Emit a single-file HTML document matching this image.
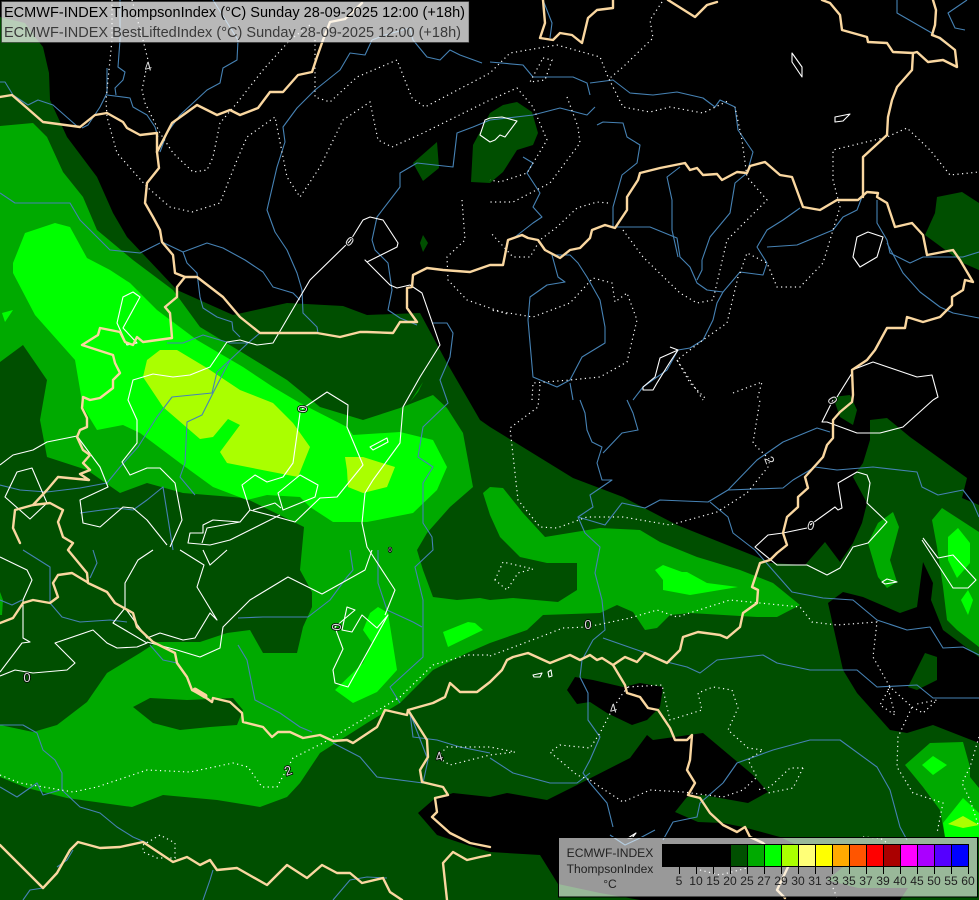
<!DOCTYPE html>
<html><head><meta charset="utf-8"><title>ECMWF-INDEX</title>
<style>
html,body{margin:0;padding:0;background:#000;width:979px;height:900px;overflow:hidden}
svg{display:block}
text{font-family:"Liberation Sans",sans-serif}
.b{fill:none;stroke:#fad7a0;stroke-width:2.4;stroke-linejoin:round;stroke-linecap:round}
.r{fill:none;stroke:#4682b4;stroke-width:1.1;stroke-linejoin:round}
.w{fill:none;stroke:#fff;stroke-width:1.1;stroke-linejoin:round}
.d{fill:none;stroke:#fff;stroke-width:1.2;stroke-dasharray:1.2 3.4;stroke-linecap:butt}
.l{fill:#ddd;font-size:13px;text-anchor:middle;paint-order:stroke;stroke:#000;stroke-width:1.5px}
.t{font-size:12.1px;fill:#222;text-anchor:middle}
</style></head><body>
<svg width="979" height="900" viewBox="0 0 979 900" xmlns="http://www.w3.org/2000/svg">
<rect width="979" height="900" fill="#004f00"/>
<g fill="#000">
<polygon points="0,0 979,0 979,270 979,203 962,192 937,197 935,213 925,235 963,263 979,270 979,505 962,498 967,478 910,437 887,418 870,420 870,440 863,463 853,477 867,503 862,523 853,543 840,562 825,542 805,565 770,563 757,557 677,525 623,497 573,478 490,427 480,420 447,363 420,313 367,315 343,306 287,303 233,315 177,290 127,237 113,213 97,177 67,137 50,100 49,73 43,47 35,37 25,23 0,17"/>
<polygon points="828,603 843,592 863,597 900,613 917,607 923,562 933,583 931,600 943,630 979,657 979,743 933,725 907,733 890,730 857,693 843,670"/>
<polygon points="418,813 433,800 453,793 490,797 507,793 547,800 577,785 630,758 647,735 653,740 703,733 753,775 768,792 748,803 703,795 687,797 675,812 698,822 723,823 743,827 780,837 843,867 827,880 858,888 908,888 900,900 640,900 600,893 558,884 540,855 490,852 470,846 437,835"/>
<polygon points="567,690 575,677 593,680 623,687 640,683 663,687 660,707 647,720 632,725 607,713 590,702 577,704"/>
</g>
<g fill="#004f00">
<polygon points="490,113 503,105 517,102 532,112 538,133 533,145 517,150 503,172 490,183 471,182 473,145"/>
<polygon points="413,163 437,142 439,168 423,181"/>
<polygon points="423,235 428,243 423,252 420,243"/>
<polygon points="833,397 850,395 857,410 853,425 840,417"/>
<polygon points="908,687 925,653 937,657 937,680 917,690"/>
<polygon points="0,188 15,191 3,193"/>
</g>
<g fill="#00aa00">
<polygon points="0,126 33,123 47,137 63,172 83,197 97,230 133,260 173,290 200,327 243,353 287,380 320,407 363,420 400,408 433,395 447,408 463,433 473,487 450,507 427,533 417,550 423,570 433,597 457,600 480,598 490,600 513,598 558,602 577,590 577,563 547,563 520,557 500,537 490,515 483,493 490,487 503,488 523,513 545,537 600,528 640,530 660,542 697,557 740,570 773,583 800,605 777,617 757,617 690,613 670,615 657,628 645,630 633,612 617,605 600,613 543,615 527,630 490,643 467,653 433,670 400,703 367,723 320,753 300,783 287,797 260,807 217,800 163,795 132,807 67,798 27,788 0,777 0,725 33,732 57,725 87,702 107,673 140,653 157,642 200,642 227,633 250,630 263,653 297,653 303,627 312,607 312,592 300,570 304,527 245,498 183,493 147,483 120,493 87,470 47,457 40,420 47,380 23,345 0,362"/>
<polygon points="423,382 410,402 418,392"/>
<polygon points="878,523 893,512 899,527 890,560 897,582 887,588 878,577 868,543"/>
<polygon points="932,520 942,508 979,532 979,647 957,630 947,620 943,587 937,547"/>
<polygon points="905,765 930,743 963,742 970,767 970,777 979,788 979,837 945,837 940,810 923,787"/>
<polygon points="0,592 3,600 2,615 0,615"/>
</g>
<polygon fill="#004f00" points="133,707 150,698 187,700 233,698 243,710 237,725 210,727 180,730 153,723"/>
<polygon fill="#004f00" points="233,607 240,607 242,617 237,622"/>
<g fill="#00ff00">
<polygon points="13,273 13,263 25,233 55,223 70,227 87,258 110,270 130,283 157,310 197,340 243,367 273,387 300,403 347,427 353,435 400,432 433,440 447,467 437,490 413,513 367,522 333,522 310,507 300,497 267,495 247,500 213,487 180,463 140,433 123,425 97,430 83,407 75,360 35,315"/>
<polygon points="2,313 13,310 5,322"/>
<polygon points="335,690 363,663 372,643 363,630 370,613 378,607 388,613 397,670 377,692 353,703"/>
<polygon points="443,632 468,622 475,623 483,630 448,647"/>
<polygon points="655,570 663,565 682,572 687,572 707,583 738,587 690,595 663,590 663,580"/>
<polygon points="948,537 958,528 970,543 970,563 957,578 948,560"/>
<polygon points="968,590 973,600 968,615 961,600"/>
<polygon points="933,756 947,765 933,775 922,765"/>
<polygon points="943,823 963,798 979,813 979,837 945,837"/>
</g>
<g fill="#aaff00">
<polygon points="143,377 147,360 160,350 177,350 207,368 240,390 273,403 293,423 310,447 298,477 227,463 220,452 240,425 228,419 213,437 200,439 163,407"/>
<polygon points="345,457 363,457 395,467 387,487 363,493 348,487 347,470"/>
<polygon points="948,824 963,816 979,825 963,828"/>
</g>

<g class="r">
<path d="M120,0L120,40L118,67L125,72L123,80L115,88L116,95"/>
<path d="M107,68L107,93L100,107L88,125L82,128"/>
<path d="M107,95L130,98L133,107L147,115L155,127L158,137"/>
<path d="M0,82L5,82L13,95L28,105L38,100L53,105L78,127"/>
<path d="M213,0L238,40L237,60L223,68L220,83L207,90L193,103L180,115L167,133L160,152"/>
<path d="M372,40L365,55L350,53L340,70L315,90L297,108L283,127L285,142L277,167L267,210L275,232L287,250L297,273L302,290L303,313L317,327L318,333"/>
<path d="M482,63L460,55L450,50L440,60L427,57L413,40L410,28L385,35L372,40"/>
<path d="M0,193L15,203L70,203L80,220L110,250L140,253L160,243"/>
<path d="M490,120L473,127L457,133L453,167L417,163L400,173L400,187L377,217L372,240L375,250L388,263L392,290L388,310L400,318L417,325"/>
<path d="M162,242L183,252L207,243L223,248L245,260L263,272L273,287L293,293L300,300"/>
<path d="M183,252L187,263L197,273L200,297L203,308L217,317L232,322L233,330L240,337"/>
<path d="M167,343L183,343L203,335L230,343L248,343L260,333"/>
<path d="M248,343L230,360L217,372L212,393L172,397L157,417L138,447L120,467L107,483L80,488L47,492L20,490L0,485"/>
<path d="M230,360L213,393L202,415L187,422L185,463L180,477L195,495"/>
<path d="M432,323L447,323L453,333L450,357L440,380L448,403L423,427L418,457L433,467L423,483L423,523L432,537L433,550L415,567L423,600L423,657L390,687L400,703"/>
<path d="M378,550L378,583L387,610L413,622L422,627"/>
<path d="M350,550L353,570L347,577L330,600L308,617L263,617L238,618"/>
<path d="M238,645L247,660L255,700L280,713L300,727L312,732"/>
<path d="M0,725L23,725L37,733L43,750L55,760L62,773L62,790L80,807L100,813L117,827L133,837L147,843"/>
<path d="M0,787L17,797L37,783L43,795L60,790"/>
<path d="M333,743L360,757L377,777L423,783"/>
<path d="M410,713L413,737L437,740L460,747L490,753"/>
<path d="M580,400L585,413L587,430L592,442L602,447L597,463L602,480L612,480L590,495L593,507L578,517L585,533L600,547L595,573L602,600L605,630L593,640L582,660L580,677L588,693L588,720L600,737L590,760L583,773L590,783L607,803L613,827"/>
<path d="M627,400L633,413L638,430L622,433L603,453"/>
<path d="M578,517L605,525L622,503L645,508L660,500L708,502L728,490L783,488L793,480L815,467L837,470L873,467L917,472L922,487L938,495L963,490L973,503L979,517"/>
<path d="M710,502L728,517L733,533L755,550L770,567L792,592L823,598L853,600L877,620L907,630L930,627L943,648L963,647L979,655"/>
<path d="M728,490L757,460L783,442L817,428L830,432"/>
<path d="M603,638L643,652L667,662L687,667L700,673L717,660L763,655L777,663L810,670L857,670L877,687L917,685L933,698L979,698"/>
<path d="M490,758L513,773L550,783L577,783L590,773"/>
<path d="M723,783L737,763L773,750L810,740L840,740L877,767L890,790L900,827L907,840"/>
<path d="M723,783L700,803L697,817L673,822L663,840"/>
<path d="M490,62L523,65L533,77L573,77L587,83L590,95"/>
<path d="M590,83L613,80L630,93L653,95L677,92L703,98L715,107L720,100L735,107L738,130L753,152L747,173L735,183L730,213L710,237L702,260L702,270L697,280"/>
<path d="M490,120L533,115L560,108L587,115L595,107"/>
<path d="M597,125L603,122L623,123L627,137L640,145L637,163L622,175L613,207L613,227L650,227L677,238L680,257L690,267L697,283L707,290L723,292L717,303L713,320L703,340L690,348L678,350L667,370L643,387L633,400"/>
<path d="M680,167L667,177L672,200L672,230L678,257"/>
<path d="M523,157L533,163L527,173L540,193L533,207L542,217L533,223L515,237"/>
<path d="M723,292L740,272L763,275L767,263L757,247L767,230L783,220L800,208"/>
<path d="M767,247L797,245L833,230L843,217L857,210L862,197"/>
<path d="M877,200L877,223L887,240L890,253L910,263L923,257L963,257L979,252"/>
<path d="M887,243L903,273L920,292L940,307L953,313L979,318"/>
<path d="M552,255L558,277L565,282L547,285L530,297L528,320L533,377L557,387L570,380L582,357L605,343L605,327L600,300L587,277L578,263L570,255L552,255"/>
<path d="M570,383L573,400"/>
<path d="M543,0L552,23L550,38"/>
<path d="M897,0L897,13L930,32L955,50"/>
<path d="M967,0L948,13L955,28L965,30"/>
<path d="M80,513L117,508L133,510L147,500L163,487L173,550"/>
<path d="M23,550L50,567L50,603L62,617L80,622L110,620L127,622"/>
<path d="M93,550L97,563L90,578"/>
<path d="M0,600L12,605L22,600"/>
<path d="M150,645L163,660L177,663"/>
<path d="M23,900L30,890L43,888"/>
<path d="M57,867L67,860L73,850"/>
<path d="M203,900L210,880L213,870"/>
<path d="M333,900L350,880L367,877L387,878"/>
<path d="M410,713L428,760L423,783"/>
<path d="M610,835L625,845L640,838L655,830"/>
</g>

<g class="w">
<path d="M350,241L310,280L300,297L273,343L257,345L240,340L227,342L210,367L190,375L173,377L153,374L133,380L128,400L137,420L137,443L122,462L130,475L147,468L160,468L175,483L182,520L170,547"/>
<path d="M350,241L363,220L370,217L383,220L398,243L397,247L367,262L365,260L390,285L397,288L410,285L422,293L440,345L420,377L403,407L400,443L373,480L365,493L362,523L367,547L395,590L385,615"/>
<path d="M302,409L327,392L348,405L347,427L363,465L337,497L320,498L295,522L277,517L250,510L242,485L255,475L267,482L283,477L293,463L300,413"/>
<path d="M300,475L318,485L315,497L283,510L278,493Z"/>
<path d="M281,508L275,503L253,510"/>
<path d="M387,438L370,447L373,450L388,442Z"/>
<path d="M133,292L140,297L123,328L137,343L127,345L117,323L123,297Z"/>
<path d="M0,465L13,455L33,450L47,442L77,436L100,467L108,487L80,500L83,523L100,527L123,507L133,508L147,520L167,545"/>
<path d="M32,468L17,472L5,497L30,519L47,503Z"/>
<path d="M240,522L213,520L203,525L203,533L190,533L188,543L210,545L230,540L280,515"/>
<path d="M250,510L240,522L207,528L202,543"/>
<path d="M0,557L27,570L32,580L23,600L23,638L30,642L22,643L0,672"/>
<path d="M0,676L15,670L33,673L67,670L75,663L55,643L93,630L107,643L117,648L137,647L147,643L113,623L125,608L125,583L138,560L153,550"/>
<path d="M125,608L147,638L160,633L183,640L195,638L210,613L217,620L197,587L204,565L180,550"/>
<path d="M203,550L210,565L227,550"/>
<path d="M147,642L177,650L200,657L220,648L223,627L250,600L288,577L322,594L365,570L372,550"/>
<path d="M335,627L337,633L343,649L333,670L335,683L348,687L388,615L377,628L362,615L352,632L342,630L347,607L355,610L335,627"/>
<path d="M933,400L903,427L880,433L857,433L827,422L822,422L833,400"/>
<path d="M852,370L873,362L917,377L932,375L938,397L933,400"/>
<path d="M852,373L837,397"/>
<path d="M810,525L835,507L838,510L842,508L838,483L857,472L867,475L870,483L867,503L887,522L868,543L853,547L840,568L827,575L807,565L777,565L755,547L768,535L783,533L807,528"/>
<path d="M882,582L887,579L897,582L885,584Z"/>
<path d="M922,540L953,588L968,588L976,580L953,555L938,558L923,538"/>
<path d="M533,675L542,673L540,677L534,677Z"/>
<path d="M548,672L551,670L552,676L549,677Z"/>
<path d="M853,257L857,237L868,232L883,237L877,257L860,267Z"/>
<path d="M792,53L802,67L802,77L792,62Z"/>
<path d="M835,117L850,114L843,121L835,122Z"/>
<path d="M490,118L502,117L517,121L505,137L500,135L495,140L490,142L480,135L485,120Z"/>
<path d="M670,347L678,350L660,358L655,377L643,387L643,390L653,390L657,383L670,362L678,350"/>
<path d="M628,838L636,833L632,838Z"/>
</g>

<g class="d">
<path d="M132,0L143,40L148,60L142,90L145,103L160,133L173,153L193,172L207,170L213,157L220,123L237,103L263,70L290,40L310,25"/>
<path d="M112,0L112,40L106,100L107,117L117,153L147,187L170,207L192,212L220,203L237,160L247,137L275,117L287,177L300,197L320,167L343,120L370,102L378,140L392,147L423,133L490,100L517,88L533,107L547,140L527,173L500,182L490,180"/>
<path d="M315,40L315,97L330,102L357,77L397,60L412,98L425,107L490,73L510,53L557,45L600,57L608,77L623,107L650,112L670,107L703,113L730,100"/>
<path d="M567,97L578,127L580,143L550,183L513,202L490,202"/>
<path d="M462,200L465,240L447,257L448,280L467,300L490,308L510,315"/>
<path d="M608,203L597,202L577,208L557,227L540,240L530,257L513,257L490,232"/>
<path d="M623,230L643,257L680,293L697,303L713,300L727,240L767,200L747,177L742,140L735,107"/>
<path d="M740,273L747,253L767,263L777,287L800,287L823,263L840,207L833,180L833,150L887,137L907,128L930,150L950,175L979,172"/>
<path d="M738,277L727,323L703,340L677,360L703,400"/>
<path d="M677,360L690,383L707,400"/>
<path d="M733,393L762,382L757,400"/>
<path d="M532,400L533,383L570,380L600,377L627,362L637,320L627,293L615,302L612,283L593,278L570,303L533,317L490,310"/>
<path d="M543,58L552,60L545,80L530,82L543,58"/>
<path d="M662,2L650,20L653,38L623,67L610,78"/>
<path d="M540,385L538,407L510,428L518,500L540,527L557,528L587,517L623,517L670,525L717,512L747,493L768,467L770,460L753,443L760,400"/>
<path d="M490,656L540,637L563,628L587,627L630,618L657,610L677,617L730,600L800,607L812,622L837,625L877,622L873,657L890,687L912,707L898,737L897,767L913,793L943,803L937,833"/>
<path d="M890,687L880,705L895,715L888,688"/>
<path d="M912,707L923,713L937,700L917,704"/>
<path d="M979,737L970,767L962,783L970,800L979,827"/>
<path d="M495,580L503,562L533,569L518,573L507,590Z"/>
<path d="M628,687L662,685L670,720L702,710L698,693L713,687L732,690L738,708L728,730L748,748L763,750L748,760L757,777L743,790L723,797L683,792L650,790L623,802L600,787L590,780"/>
<path d="M628,687L623,693L613,708L600,733L590,748L560,745L550,752L577,775L590,780"/>
<path d="M437,757L447,747L490,747L515,752L490,755L450,765L437,757"/>
<path d="M803,768L790,768L770,787L757,790"/>
<path d="M803,768L793,788L768,793"/>
<path d="M0,775L20,783L73,792L97,787L147,770L190,772L233,763L248,767L262,787L277,787L293,758L323,743L367,717L400,697L433,665L467,655L490,655"/>
<path d="M143,845L160,835L175,843L175,858L157,858L143,852Z"/>
<path d="M700,870L720,875L747,868"/>
<path d="M863,837L880,838L890,845"/>
<path d="M833,888L838,900"/>
</g>

<g class="b">
<path d="M0,97L12,95L27,108L43,122L80,127L95,115L107,113L123,122L127,128L140,135L157,133L157,152"/>
<path d="M157,152L172,123L197,105L217,115L230,110L240,115L258,108L270,92L283,92L298,75L312,72L317,57L323,40L330,22L345,19L362,3"/>
<path d="M157,152L159,168L147,183L145,203L153,217L160,230L162,242L173,255L175,273L185,277L177,287L177,297L165,307L170,313L172,338L143,342L137,337L133,345L125,342L120,332L100,328L98,335L82,345L113,355L115,363L120,373L113,380L113,388L100,398L90,400L83,397L82,408L87,418L87,427L80,430L77,437L83,450L90,455L83,463L90,470L80,474L89,480L58,477L47,490L33,505L15,510L13,528L20,543"/>
<path d="M33,505L50,503L63,510L58,522L63,537L73,543L68,550L87,573L88,583L107,592L115,603L133,613L137,627L153,642L175,653L177,663L187,677L192,690L202,695L212,702L213,698L230,702L242,713L243,722L263,727L272,737L278,732L290,732L303,738L320,735L333,741L347,740L353,743L377,727L385,710L407,715L408,710L433,703L445,697L450,683L460,692L477,692L490,682L502,670L507,660L513,657L528,653L550,663L570,655L580,660L590,655L597,660L602,658L613,665L625,657L637,662L645,653L667,663L680,650L683,637L698,632L720,635L727,638L740,627L743,613L757,603L758,590L752,587L760,563L770,560L777,553L787,545L783,533L787,517L798,507L798,497L808,488L805,477L823,457L827,445L833,438L833,420L840,412L852,402L853,395L852,370L867,360L875,350L887,328L905,328L907,317L923,322L940,317L952,305L952,297L963,290L965,280L973,282L960,260L953,250L927,255L923,235L912,223L895,227L887,203L877,197L878,193L867,192L858,200L837,200L820,210L803,207L792,177L780,175L765,162L750,166L747,173L737,172L722,180L717,174L703,175L697,168L690,170L685,163L660,168L640,173L638,180L627,197L627,210L615,228L605,225L592,230L590,238L580,248L570,250L560,258L545,250L538,240L528,238L522,235L508,240L503,265L490,265L470,272L443,270L427,268L413,275L412,287L407,288L407,308L417,322L400,322L393,333L367,332L360,332L340,337L317,333L293,333L260,333L240,317L223,297L197,277L185,277"/>
<path d="M863,197L863,157L887,135L888,117L892,100L897,87L912,70L913,53L893,52L887,43L868,42L867,37L842,30L840,15L830,3L822,0"/>
<path d="M913,53L917,52L928,62L943,60L957,67L955,50L940,38L932,35L935,25L936,10L933,0"/>
<path d="M543,0L545,23L540,38L553,40L560,33L572,35L582,43L588,18L597,10L613,8L613,0"/>
<path d="M668,0L695,17L707,5L717,2"/>
<path d="M0,623L13,618L23,603L33,600L50,603L58,597L53,583L58,575L72,573L87,582"/>
<path d="M0,845L20,865L43,888L57,873L70,850L78,842L100,848L120,847L143,842L173,862L187,857L200,865L210,860L217,870L237,868L267,885L287,865L307,878L322,865L337,873L350,873L362,883L383,878L390,892L402,900"/>
<path d="M447,900L443,863L453,852L467,860L480,857L490,855"/>
<path d="M408,710L427,740L428,757L420,770L422,782L443,787L448,795L435,798L437,812L432,817L450,833L470,843L490,847"/>
<path d="M613,665L625,685L627,693L640,697L648,708L658,710L670,728L675,740L687,740L692,735L690,760L687,770L695,783L688,795L700,798L710,813L723,825L737,832L745,827L750,837L763,843L788,867L777,890L785,898"/>
<path d="M195,690L205,696" stroke-width="5"/>
</g>

<g class="l">
<text x="148" y="71" transform="rotate(-15 148 67)">4</text>
<text x="350" y="246" transform="rotate(35 350 241)">0</text>
<text x="302" y="414" transform="rotate(-85 302 409)">0</text>
<text x="27" y="682">0</text>
<text x="336" y="632" transform="rotate(-85 336 627)">0</text>
<text x="288" y="775" transform="rotate(-20 288 770)">2</text>
<text x="439" y="761" transform="rotate(-15 439 756)">4</text>
<text x="770" y="465" transform="rotate(70 770 460)">2</text>
<text x="811" y="530" transform="rotate(15 811 525)">0</text>
<text x="833" y="405" transform="rotate(60 833 400)">0</text>
<text x="613" y="713" transform="rotate(-15 613 708)">4</text>
<text x="588" y="629">0</text>
<text x="390" y="552" style="font-size:6px">0</text>
</g>

<!-- header -->
<rect x="1.5" y="1.5" width="467.5" height="41" fill="rgba(255,255,255,.72)" stroke="#222" stroke-opacity=".5" stroke-width="1"/>
<text x="4" y="17" font-size="14.5" fill="#000" textLength="461">ECMWF-INDEX ThompsonIndex (°C) Sunday 28-09-2025 12:00 (+18h)</text>
<text x="4" y="37" font-size="14.5" fill="#3a3a3a" textLength="457">ECMWF-INDEX BestLiftedIndex (°C) Sunday 28-09-2025 12:00 (+18h)</text>

<!-- legend -->
<rect x="558.5" y="837.5" width="419" height="59.5" fill="rgba(255,255,255,.6)" stroke="#000" stroke-width="1"/>
<text class="t" x="610" y="857">ECMWF-INDEX</text>
<text class="t" x="610" y="873">ThompsonIndex</text>
<text class="t" x="610" y="888">°C</text>
<g stroke="#000" stroke-width="1" shape-rendering="crispEdges">
<rect x="662.5" y="844.5" width="17" height="22" fill="#000"/>
<rect x="679.5" y="844.5" width="17" height="22" fill="#000"/>
<rect x="696.5" y="844.5" width="17" height="22" fill="#000"/>
<rect x="713.5" y="844.5" width="17" height="22" fill="#000"/>
<rect x="730.5" y="844.5" width="17" height="22" fill="#004f00"/>
<rect x="747.5" y="844.5" width="17" height="22" fill="#00aa00"/>
<rect x="764.5" y="844.5" width="17" height="22" fill="#00ff00"/>
<rect x="781.5" y="844.5" width="17" height="22" fill="#aaff00"/>
<rect x="798.5" y="844.5" width="17" height="22" fill="#ffff77"/>
<rect x="815.5" y="844.5" width="17" height="22" fill="#ffff00"/>
<rect x="832.5" y="844.5" width="17" height="22" fill="#ffaa00"/>
<rect x="849.5" y="844.5" width="17" height="22" fill="#ff5500"/>
<rect x="866.5" y="844.5" width="17" height="22" fill="#ff0000"/>
<rect x="883.5" y="844.5" width="17" height="22" fill="#aa0000"/>
<rect x="900.5" y="844.5" width="17" height="22" fill="#ff00ff"/>
<rect x="917.5" y="844.5" width="17" height="22" fill="#aa00ff"/>
<rect x="934.5" y="844.5" width="17" height="22" fill="#5500ff"/>
<rect x="951.5" y="844.5" width="17" height="22" fill="#0000ff"/>
<path d="M679.5,866V874M696.5,866V874M713.5,866V874M730.5,866V874M747.5,866V874M764.5,866V874M781.5,866V874M798.5,866V874M815.5,866V874M832.5,866V874M849.5,866V874M866.5,866V874M883.5,866V874M900.5,866V874M917.5,866V874M934.5,866V874M951.5,866V874M968.5,866V874" fill="none"/>
</g>
<g class="t">
<text x="679" y="885">5</text><text x="696" y="885">10</text><text x="713" y="885">15</text><text x="730" y="885">20</text><text x="747" y="885">25</text><text x="764" y="885">27</text><text x="781" y="885">29</text><text x="798" y="885">30</text><text x="815" y="885">31</text><text x="832" y="885">33</text><text x="849" y="885">35</text><text x="866" y="885">37</text><text x="883" y="885">39</text><text x="900" y="885">40</text><text x="917" y="885">45</text><text x="934" y="885">50</text><text x="951" y="885">55</text><text x="968" y="885">60</text>
</g>
</svg>
</body></html>
